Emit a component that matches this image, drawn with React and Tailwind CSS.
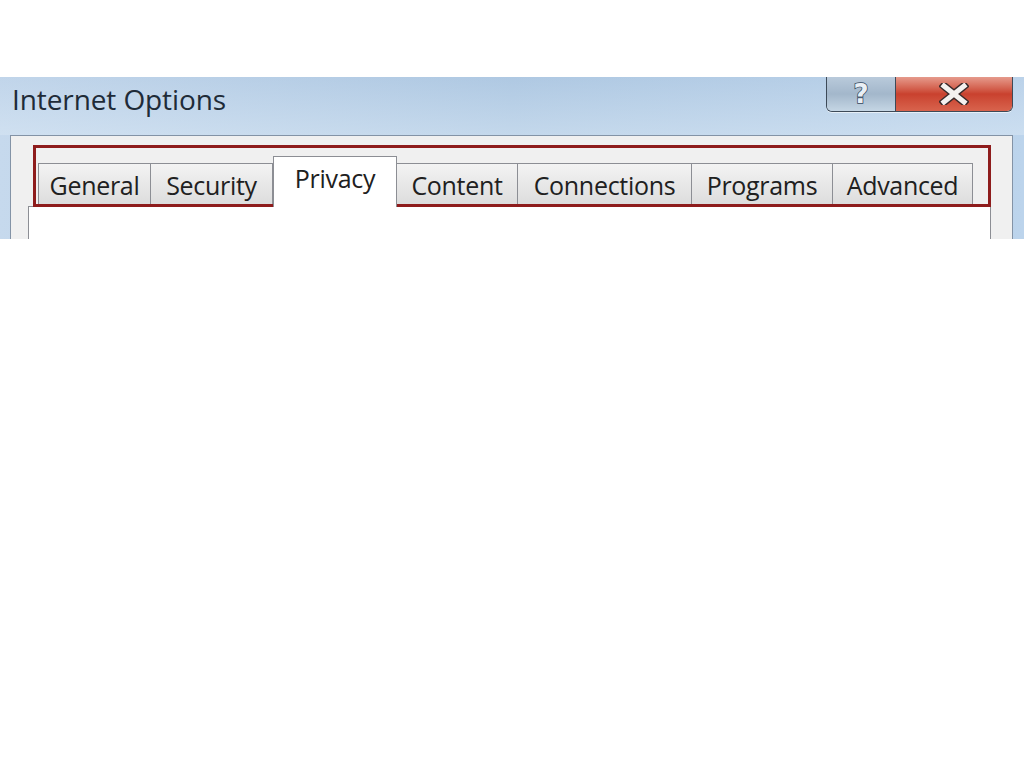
import React from "react";

const TABS = [
  { label: "General", w: "w-[113px]" },
  { label: "Security", w: "w-[122px]" },
  { label: "Privacy", w: "w-[124px]", active: true },
  { label: "Content", w: "w-[121px]" },
  { label: "Connections", w: "w-[174px]" },
  { label: "Programs", w: "w-[141px]" },
  { label: "Advanced", w: "w-[140px]" },
];

function Tab({ label, w, active }) {
  if (active) {
    return (
      <div
        className={`${w} h-[51px] -mb-px relative z-10 bg-white border border-b-0 border-[#8c8e94] flex items-start justify-center pt-[9px] text-[#202020]`}
      >
        {label}
      </div>
    );
  }
  return (
    <div
      className={`${w} h-[43px] border border-b-0 border-l-0 first:border-l border-[#8c8e94] bg-gradient-to-b from-[#f3f3f3] to-[#dcdcdc] flex items-start justify-center pt-[9px] text-[#202020]`}
    >
      {label}
    </div>
  );
}

function TitleButtons() {
  return (
    <div className="flex h-[35px] border border-t-0 border-[#3d4a58] rounded-b-[6px] shadow-[0_1px_0_rgba(255,255,255,0.6)]">
      <div className="w-[69px] rounded-bl-[5px] bg-gradient-to-b from-[#b9cadb] via-[#a3b7cb] to-[#c5d6e4] flex items-center justify-center border-r border-[#3d4a58]">
        <span className="font-['DejaVu_Sans',sans-serif] text-[26px] font-bold text-[#e9eff5] leading-[30px] [-webkit-text-stroke:1.5px_#34475d] [paint-order:stroke_fill]">
          ?
        </span>
      </div>
      <div className="w-[116px] rounded-br-[5px] bg-gradient-to-b from-[#e59a8c] via-[#c9412e] to-[#d8634d] flex items-center justify-center">
        <svg width="30" height="22" viewBox="0 0 30 22">
          <path
            d="M5 3 L25 19 M25 3 L5 19"
            stroke="#3a2a2a"
            strokeWidth="8"
            strokeLinecap="square"
          />
          <path
            d="M5 3 L25 19 M25 3 L5 19"
            stroke="#f4f1ef"
            strokeWidth="5"
            strokeLinecap="square"
          />
        </svg>
      </div>
    </div>
  );
}

export default function App() {
  return (
    <div className="w-[1024px] h-[768px] bg-white font-['Open_Sans','Noto_Sans',sans-serif] overflow-hidden">
      <div className="h-[77px]" />
      <div className="relative h-[162px] overflow-hidden bg-gradient-to-r from-[#c6d9ed] via-[#a8c4e0] to-[#bcd4ec]">
        {/* title bar */}
        <div className="h-[58px] flex items-start justify-between pl-[12px] pr-[11px] bg-gradient-to-b from-[#b9cfe6]/40 to-[#d6e5f3]/60">
          <div className="text-[28px] text-[#1e2b38] leading-none pt-[8px] tracking-[-0.1px]">
            Internet Options
          </div>
          <TitleButtons />
        </div>
        {/* client area */}
        <div className="mx-[10px] mr-[11px] h-[104px] bg-[#f0f0f0] border border-b-0 border-[#8393a6] pt-[26px] px-[17px]">
          <div className="flex items-end pl-[10px] text-[25px] leading-none h-[44px] tracking-[-0.3px]">
            {TABS.map((t) => (
              <Tab key={t.label} {...t} />
            ))}
          </div>
          <div className="h-[60px] bg-white border border-b-0 border-[#8c8e94] mr-[4px]" />
        </div>
        {/* highlight box */}
        <div className="absolute left-[33px] top-[68px] w-[958px] h-[62px] border-[3px] border-[#8e1c1c] pointer-events-none" />
      </div>
    </div>
  );
}
